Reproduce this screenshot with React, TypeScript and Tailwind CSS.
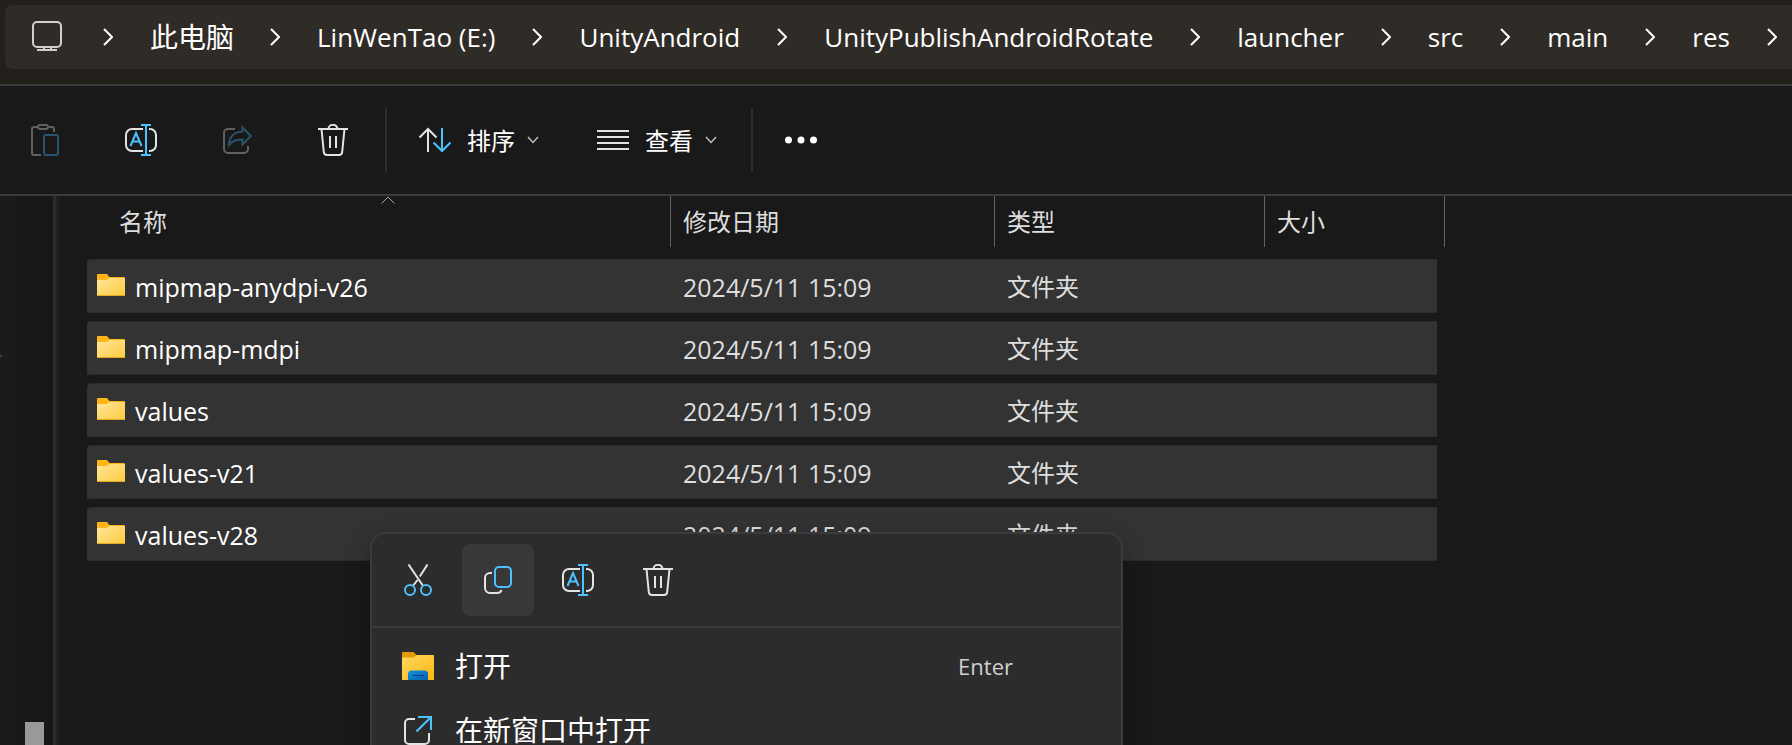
import React from "react";

const crumbs = [
  "LinWenTao (E:)",
  "UnityAndroid",
  "UnityPublishAndroidRotate",
  "launcher",
  "src",
  "main",
  "res",
];

const files = [
  { name: "mipmap-anydpi-v26", date: "2024/5/11 15:09", type: "文件夹" },
  { name: "mipmap-mdpi", date: "2024/5/11 15:09", type: "文件夹" },
  { name: "values", date: "2024/5/11 15:09", type: "文件夹" },
  { name: "values-v21", date: "2024/5/11 15:09", type: "文件夹" },
  { name: "values-v28", date: "2024/5/11 15:09", type: "文件夹" },
];

const WHITE = "#e4e4e4";
const BLUE = "#4cc2ff";

type IconProps = { children: React.ReactNode; className?: string };

function Icon({ children, className = "size-8" }: IconProps) {
  return (
    <svg
      viewBox="0 0 32 32"
      className={`shrink-0 ${className}`}
      fill="none"
      stroke={WHITE}
      strokeWidth={2}
      aria-hidden="true"
    >
      {children}
    </svg>
  );
}

function ComputerIcon() {
  return (
    <Icon>
      <rect x="2" y="1" width="28" height="25" rx="4" stroke="#d0cfce" />
      <path d="M13 26v3M20 26v3M6 29h20" stroke="#d0cfce" />
    </Icon>
  );
}

function PasteIcon() {
  return (
    <Icon>
      <g stroke="#606060">
        <path d="M12 31H5a2 2 0 0 1-2-2V5a2 2 0 0 1 2-2h4" />
        <rect x="9" y="1" width="10" height="4" rx="2" />
        <path d="M19 3h4a2 2 0 0 1 2 2v3" />
      </g>
      <rect x="15" y="11" width="14" height="20" rx="2" stroke="#28546d" />
    </Icon>
  );
}

function RenameIcon() {
  return (
    <Icon>
      <path d="M18 5H7a6 6 0 0 0-6 6v10a6 6 0 0 0 6 6h11M24 5h1a6 6 0 0 1 6 6v10a6 6 0 0 1-6 6h-1" />
      <path d="M16 1h10M16 31h10M21 1v30" stroke={BLUE} />
      <path d="M5.500 22 11 9l5.500 13M7.500 17.500h7" stroke={BLUE} />
    </Icon>
  );
}

function ShareIcon() {
  return (
    <Icon>
      <path d="M14 5H7a4 4 0 0 0-4 4v16a4 4 0 0 0 4 4h16a4 4 0 0 0 4-4v-3" stroke="#606060" />
      <path d="M21.500 3.500 30 12l-8.500 8.500v-5C15 15.500 11 17 8 21c0-8 5-13 13.500-13.500z" stroke="#28546d" />
    </Icon>
  );
}

function TrashIcon() {
  return (
    <Icon>
      <path d="M1 5h30M11.500 5a4.500 4.200 0 0 1 9 0" />
      <path d="m4.500 5 2.300 23a3.300 3.300 0 0 0 3.300 3h11.800a3.300 3.300 0 0 0 3.300-3l2.300-23M13 12v12M19 12v12" />
    </Icon>
  );
}

function SortIcon() {
  return (
    <Icon>
      <path d="M9 28V5M.500 13.500 9 5l8.500 8.500" />
      <path d="M23 4v23M14.500 18.500 23 27l8.500-8.500" stroke={BLUE} />
    </Icon>
  );
}

function ViewIcon() {
  return (
    <Icon>
      <path d="M0 7h32M0 13h32M0 19h32M0 25h32" />
    </Icon>
  );
}

function MoreIcon() {
  return (
    <Icon>
      <g fill="#ffffff" stroke="none">
        <circle cx="3.500" cy="16" r="3.500" />
        <circle cx="16" cy="16" r="3.500" />
        <circle cx="28.500" cy="16" r="3.500" />
      </g>
    </Icon>
  );
}

function ScissorsIcon() {
  return (
    <Icon>
      <path d="M6.500.500 20.800 21.500M25.500.500 17.800 12.500M15.500 16 11.200 21.500" />
      <circle cx="8" cy="26" r="5" stroke={BLUE} />
      <circle cx="24" cy="26" r="5" stroke={BLUE} />
    </Icon>
  );
}

function CopyIcon() {
  return (
    <Icon>
      <path d="M10 9H8a5 5 0 0 0-5 5v10a5 5 0 0 0 5 5h7c2.500 0 4-1 4.500-3" />
      <rect x="13" y="3" width="16" height="20" rx="4" stroke={BLUE} />
    </Icon>
  );
}

function NewWindowIcon() {
  return (
    <Icon>
      <path d="M13 5H7a4 4 0 0 0-4 4v17a4 4 0 0 0 4 4h16a4 4 0 0 0 4-4v-7" />
      <path d="M16 3h13v13M29 3 14.500 17.500" stroke={BLUE} />
    </Icon>
  );
}

function ExplorerIcon() {
  return (
    <svg viewBox="0 0 32 32" className="size-8 shrink-0" aria-hidden="true">
      <defs>
        <linearGradient id="explorer-body" x1="0" y1="0" x2="1" y2="1">
          <stop offset="0" stopColor="#ffd863" />
          <stop offset="1" stopColor="#fbb70f" />
        </linearGradient>
        <linearGradient id="explorer-clip" x1="0" y1="0" x2="1" y2="1">
          <stop offset="0" stopColor="#1591df" />
          <stop offset="1" stopColor="#0560b0" />
        </linearGradient>
      </defs>
      <path d="M0 3a1 1 0 0 1 1-1h10.500L14.500 5H31v3H0z" fill="#e09b06" />
      <path d="M0 7.500h11.500L15 5h16a1 1 0 0 1 1 1v24H0z" fill="url(#explorer-body)" />
      <path d="M6 30v-6a3.500 3.500 0 0 1 3.500-3.500h13A3.500 3.500 0 0 1 26 24v6z" fill="url(#explorer-clip)" />
      <path d="M10.500 25.500h11.500" stroke="#063f80" strokeWidth="1" />
    </svg>
  );
}

function FolderIcon() {
  return (
    <svg viewBox="0 0 28 22" className="mb-0.5 h-[22px] w-7 shrink-0" aria-hidden="true">
      <defs>
        <linearGradient id="folder-body" x1="0" y1="0" x2="1" y2="1">
          <stop offset="0" stopColor="#ffe69b" />
          <stop offset="1" stopColor="#ffcb3d" />
        </linearGradient>
      </defs>
      <path d="M0 1a1 1 0 0 1 1-1h9l2.500 3H27a1 1 0 0 1 1 1v4H0z" fill="#fdb614" />
      <path d="M0 6h9.500L12.500 4H28v17a1 1 0 0 1-1 1H1a1 1 0 0 1-1-1z" fill="url(#folder-body)" />
      <path d="M0 21.500h28" stroke="#e5a923" strokeWidth="1" />
    </svg>
  );
}

function CrumbChevron() {
  return (
    <svg viewBox="0 0 10 18" className="h-[18px] w-2.5 shrink-0" fill="none" stroke="#ffffff" strokeWidth={2} aria-hidden="true">
      <path d="m1 1 8 8-8 8" />
    </svg>
  );
}

function DownChevron() {
  return (
    <svg viewBox="0 0 12 8" className="h-2 w-3 shrink-0" fill="none" stroke="#bdbdbd" strokeWidth={1.5} aria-hidden="true">
      <path d="m1 1 5 5.500L11 1" />
    </svg>
  );
}

function AddressBar() {
  return (
    <div className="shrink-0 overflow-hidden border-b-2 border-[#3b3b3b] bg-[#231f1b] pt-[5px] pb-[15px] pl-[5px]">
      <nav aria-label="路径" className="flex h-16 items-center rounded-l-lg bg-[#2f2c28] pl-[26px] text-[26px] leading-8 text-white">
        <button type="button" aria-label="此设备" className="mr-10">
          <ComputerIcon />
        </button>
        <CrumbChevron />
        <button type="button" className="mr-9 ml-[37px] shrink-0 text-[28px] leading-8 whitespace-nowrap">
          此电脑
        </button>
        <CrumbChevron />
        {crumbs.map((crumb) => (
          <React.Fragment key={crumb}>
            <button type="button" className="mr-[37px] ml-[37px] shrink-0 whitespace-nowrap">
              {crumb}
            </button>
            <CrumbChevron />
          </React.Fragment>
        ))}
      </nav>
    </div>
  );
}

function ToolButton({ label, disabled, children }: { label: string; disabled?: boolean; children: React.ReactNode }) {
  return (
    <button type="button" aria-label={label} disabled={disabled} className="flex size-16 items-center justify-center rounded-lg">
      {children}
    </button>
  );
}

function Toolbar() {
  return (
    <div role="toolbar" className="flex h-[110px] shrink-0 items-center border-b-2 border-[#3b3b3b] pl-[13px] text-2xl text-white">
      <div className="flex gap-8">
        <ToolButton label="粘贴" disabled>
          <PasteIcon />
        </ToolButton>
        <ToolButton label="重命名">
          <RenameIcon />
        </ToolButton>
        <ToolButton label="共享" disabled>
          <ShareIcon />
        </ToolButton>
        <ToolButton label="删除">
          <TrashIcon />
        </ToolButton>
      </div>
      <div className="ml-5 h-16 w-0.5 bg-[#2e2e2e]" />
      <button type="button" className="ml-8 flex items-center">
        <SortIcon />
        <span className="mr-3 ml-4 pt-0.5">排序</span>
        <DownChevron />
      </button>
      <button type="button" className="ml-[58px] flex items-center">
        <ViewIcon />
        <span className="mr-3 ml-4 pt-0.5">查看</span>
        <DownChevron />
      </button>
      <div className="ml-[34px] h-16 w-0.5 bg-[#2e2e2e]" />
      <button type="button" aria-label="更多" className="ml-8">
        <MoreIcon />
      </button>
    </div>
  );
}

function NavPane() {
  return (
    <aside className="flex w-[59px] shrink-0 border-r-[3px] border-[#1f1f1f]">
      <div className="w-[17px] bg-[#1b1b1b] pt-[159px]">
        <div className="h-0.5 w-0.5 bg-[#444444]" />
      </div>
      <div className="flex grow items-end border-r-[3px] border-[#2b2b2b] bg-[#171717] pl-2">
        <div className="h-[23px] w-[19px] bg-[#999999]" />
      </div>
    </aside>
  );
}

const headBox = "flex h-[51px] items-center border-r border-[#636363]";
const rowCell =
  "h-[62px] border-b-8 border-transparent bg-[#333333] bg-clip-padding p-0 shadow-[inset_0_1px_#2b2b2b,inset_0_-1px_#2b2b2b]";

function FileTable() {
  return (
    <table className="w-[1358px] table-fixed border-separate border-spacing-0 text-left text-2xl text-[#dedede]">
      <colgroup>
        <col />
        <col className="w-[324px]" />
        <col className="w-[270px]" />
        <col className="w-[180px]" />
      </colgroup>
      <thead>
        <tr className="h-[63px] align-top">
          <th scope="col" className="relative p-0 font-normal">
            <div className={`${headBox} pl-8`}>名称</div>
            <svg viewBox="0 0 14 8" className="absolute top-0 left-[294px] h-2 w-3.5" fill="none" stroke="#a8a8a8" aria-hidden="true">
              <path d="m.500 7.500 6.500-6.500 6.500 6.500" />
            </svg>
          </th>
          <th scope="col" className="p-0 font-normal">
            <div className={`${headBox} pl-3`}>修改日期</div>
          </th>
          <th scope="col" className="p-0 font-normal">
            <div className={`${headBox} pl-3`}>类型</div>
          </th>
          <th scope="col" className="p-0 font-normal">
            <div className={`${headBox} pl-3`}>大小</div>
          </th>
        </tr>
      </thead>
      <tbody>
        {files.map((file) => (
          <tr key={file.name}>
            <td className={`${rowCell} rounded-l-sm`}>
              <div className="flex items-center gap-2.5 pl-2.5 text-[25px] leading-8 text-white">
                <FolderIcon />
                <span className="pt-0.5">{file.name}</span>
              </div>
            </td>
            <td className={rowCell}>
              <div className="pt-0.5 pl-3 text-[25px] leading-8">{file.date}</div>
            </td>
            <td className={rowCell}>
              <div className="pt-0.5 pl-3">{file.type}</div>
            </td>
            <td className={`${rowCell} border-r-8`} />
          </tr>
        ))}
      </tbody>
    </table>
  );
}

function ContextMenu() {
  return (
    <div
      role="menu"
      className="absolute top-[532px] left-[370px] w-[753px] rounded-2xl border-2 border-[#3b3b3b] bg-[#2c2c2c] shadow-[0_8px_24px_rgba(0,0,0,0.3)]"
    >
      <div className="flex gap-2 border-b-2 border-[#3b3b3b] p-2.5">
        <button type="button" aria-label="剪切" className="flex size-[72px] items-center justify-center rounded-lg">
          <ScissorsIcon />
        </button>
        <button type="button" aria-label="复制" className="flex size-[72px] items-center justify-center rounded-lg bg-[#383838]">
          <CopyIcon />
        </button>
        <button type="button" aria-label="重命名" className="flex size-[72px] items-center justify-center rounded-lg">
          <RenameIcon />
        </button>
        <button type="button" aria-label="删除" className="flex size-[72px] items-center justify-center rounded-lg">
          <TrashIcon />
        </button>
      </div>
      <div className="flex flex-col pt-1.5 pb-2 text-[28px] text-white">
        <button type="button" role="menuitem" className="flex h-16 items-center pr-[108px] pl-[30px]">
          <ExplorerIcon />
          <span className="ml-[21px]">打开</span>
          <span className="ml-auto text-[22px] text-[#cfcfcf]">Enter</span>
        </button>
        <button type="button" role="menuitem" className="flex h-16 items-center pr-[108px] pl-[30px]">
          <NewWindowIcon />
          <span className="ml-[21px]">在新窗口中打开</span>
        </button>
      </div>
    </div>
  );
}

export default function App() {
  return (
    <div className="relative flex h-screen flex-col overflow-hidden bg-[#191919] font-['Open_Sans','Noto_Sans_CJK_SC',sans-serif]">
      <AddressBar />
      <Toolbar />
      <div className="flex min-h-0 grow">
        <NavPane />
        <main className="min-w-0 grow pl-7">
          <FileTable />
        </main>
      </div>
      <ContextMenu />
    </div>
  );
}
